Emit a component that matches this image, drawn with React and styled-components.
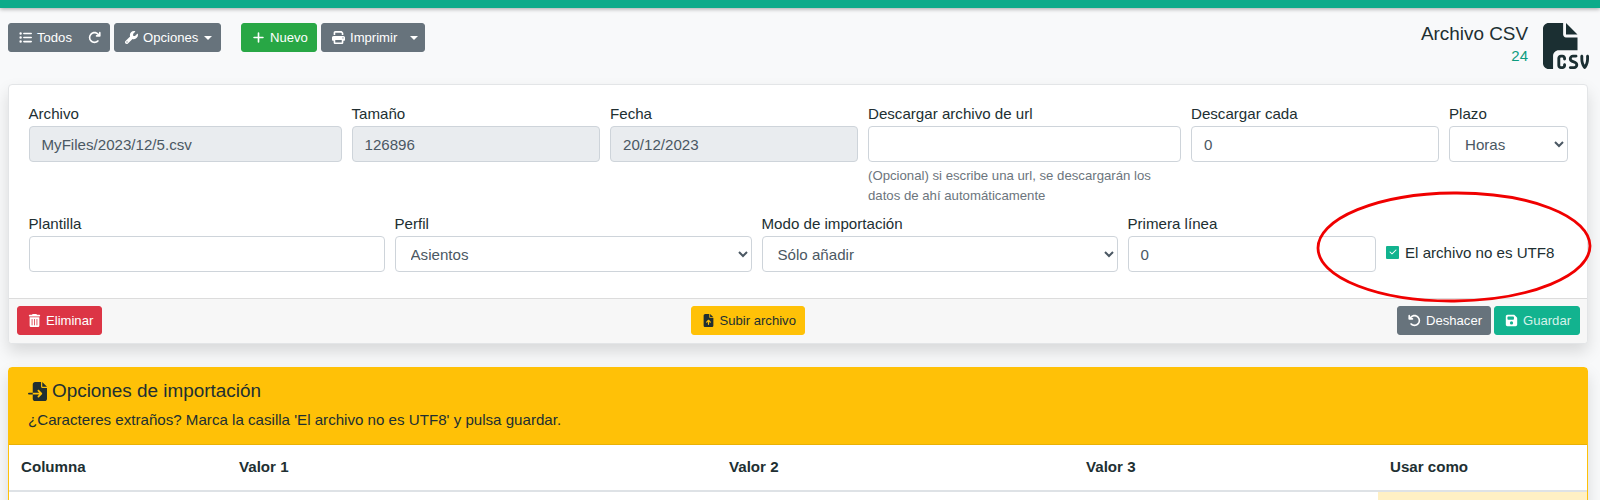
import React from "react";
import styled, { createGlobalStyle } from "styled-components";
import {
  FaListUl, FaArrowRotateRight, FaWrench, FaPlus, FaPrint, FaFileCsv, FaTrashCan,
  FaFileArrowUp, FaArrowRotateLeft, FaFloppyDisk, FaFileImport, FaCheck,
} from "react-icons/fa6";

const Global = createGlobalStyle`
  html, body { margin: 0; padding: 0; height: 500px; overflow: hidden; background: #f8f9fa; }
  body { font-family: "Liberation Sans", Arial, sans-serif; font-size: 15.12px; color: #212f32; }
  * { box-sizing: border-box; }
`;

const Page = styled.div`
  position: relative;
  width: 1600px;
  height: 500px;
  overflow: hidden;
`;
const TopBar = styled.div`
  height: 8px;
  background: #0dab8a;
  box-shadow: 0 1px 4px rgba(0, 0, 0, 0.35);
`;
const Main = styled.div`
  padding: 15px 12px 0 8px;
`;
const Header = styled.header`
  display: flex;
  justify-content: space-between;
  height: 61px;
`;
const Toolbar = styled.div`
  display: flex;
  align-items: flex-start;
  gap: 4px;
`;
const Spacer = styled.div`
  width: 12px;
`;
const Btn = styled.button`
  display: inline-flex;
  align-items: center;
  gap: 5px;
  height: 29px;
  width: ${(p) => p.$w}px;
  padding: 0 10px;
  border: 1px solid ${(p) => p.$bg};
  border-radius: 3px;
  background: ${(p) => p.$bg};
  color: ${(p) => p.$fg || "#fff"};
  font: 13.1px "Liberation Sans", Arial, sans-serif;
  white-space: nowrap;
  svg { flex: none; font-size: 13px; }
`;
const UploadBtn = styled(Btn)`
  margin-left: -4px;
`;
const Push = styled.span`
  margin-left: auto;
  margin-right: -2px;
  display: inline-flex;
`;
const Caret = styled.span`
  width: 0;
  height: 0;
  margin-left: auto;
  margin-right: ${(p) => p.$shift}px;
  border-left: 4px solid transparent;
  border-right: 4px solid transparent;
  border-top: 4px solid #fff;
`;
const Title = styled.div`
  display: flex;
  gap: 15px;
  margin-right: -1px;
`;
const TitleText = styled.div`
  text-align: right;
`;
const TitleName = styled.div`
  font-size: 18.9px;
  line-height: 22px;
`;
const TitleCount = styled.div`
  font-size: 15px;
  line-height: 18px;
  margin-top: 2px;
  color: #0d9c7e;
`;
const Card = styled.section`
  width: 1580px;
  background: #fff;
  border-radius: 4px;
  border: 1px solid #e3e5e7;
  box-shadow: 0 8px 16px rgba(0, 0, 0, 0.13);
`;
const Body = styled.div`
  padding: 20px 19px 26px 19.5px;
  display: flex;
  flex-direction: column;
  gap: 9px;
`;
const Row = styled.div`
  display: grid;
  grid-template-columns: ${(p) => p.$cols};
  column-gap: 10px;
  align-items: start;
`;
const Field = styled.div`
  display: flex;
  flex-direction: column;
`;
const Label = styled.label`
  font-size: 15.12px;
  line-height: 17px;
  margin-bottom: 4px;
`;
const Input = styled.div`
  height: 36px;
  padding: 0 12px;
  display: flex;
  align-items: center;
  font-size: 15.12px;
  color: #4b5863;
  border: 1px solid #ced4da;
  border-radius: 4px;
  background: ${(p) => (p.$readonly ? "#e9ecef" : "#fff")};
`;
const SelectBox = styled.select`
  height: 36px;
  width: 100%;
  padding: 0 8px 0 11px;
  font: 15.12px "Liberation Sans", Arial, sans-serif;
  color: #4b5863;
  border: 1px solid #ced4da;
  border-radius: 4px;
  background: #fff;
`;
const Help = styled.small`
  display: block;
  margin-top: 4px;
  font-size: 13.2px;
  line-height: 20px;
  color: #6c757d;
`;
const CheckWrap = styled.div`
  display: flex;
  align-items: center;
  gap: 6px;
  padding-top: 19px;
  height: 55px;
  font-size: 15.12px;
  white-space: nowrap;
`;
const Box = styled.span`
  display: inline-flex;
  align-items: center;
  justify-content: center;
  width: 13px;
  height: 13px;
  background: #12b38f;
  border-radius: 1px;
  color: #fff;
  svg { font-size: 8px; }
`;
const Footer = styled.div`
  display: flex;
  justify-content: space-between;
  align-items: center;
  height: 45px;
  padding: 0 7px 2px 8px;
  background: #f7f7f7;
  border-top: 1px solid #dcdcdc;
  border-radius: 0 0 4px 4px;
`;
const FooterGroup = styled.div`
  display: flex;
  gap: 3px;
`;
const WarnCard = styled.section`
  width: 1580px;
  margin-top: 23px;
  border: 1px solid #ffc107;
  border-radius: 4px;
  background: #fff;
  box-shadow: 0 8px 16px rgba(0, 0, 0, 0.13);
`;
const WarnHead = styled.div`
  height: 77px;
  background: #ffc107;
  padding: 11px 19px 0;
  border-bottom: 1px solid #e9b106;
`;
const WarnTitle = styled.div`
  display: flex;
  align-items: center;
  gap: 5px;
  font-size: 18.9px;
  line-height: 24px;
  svg { font-size: 19px; }
`;
const WarnText = styled.div`
  font-size: 15.12px;
  line-height: 20px;
  margin-top: 7px;
`;
const Table = styled.table`
  width: 100%;
  border-collapse: collapse;
  table-layout: fixed;
`;
const Th = styled.th`
  width: ${(p) => p.$w}px;
  height: 46px;
  padding: 0 12px 2px;
  text-align: left;
  font-size: 15.12px;
  font-weight: 700;
  border-bottom: 2px solid #dee2e6;
`;
const Td = styled.td`
  height: 46px;
  background: ${(p) => (p.$tint ? "#fff0c4" : "#fff")};
`;
const Ring = styled.svg`
  position: absolute;
  left: 1312px;
  top: 187px;
  width: 284px;
  height: 120px;
  pointer-events: none;
`;

function Select({ value }) {
  return (
    <SelectBox defaultValue={value}>
      <option>{value}</option>
    </SelectBox>
  );
}

export default function App() {
  return (
    <Page>
      <Global />
      <TopBar />
      <Main>
        <Header>
          <Toolbar>
            <Btn $bg="#67737c" $w={102}><FaListUl />Todos<Push><FaArrowRotateRight /></Push></Btn>
            <Btn $bg="#67737c" $w={107}><FaWrench />Opciones<Caret $shift={-2} /></Btn>
            <Spacer />
            <Btn $bg="#28a745" $w={76}><FaPlus />Nuevo</Btn>
            <Btn $bg="#67737c" $w={104}><FaPrint />Imprimir<Caret $shift={-4} /></Btn>
          </Toolbar>
          <Title>
            <TitleText>
              <TitleName>Archivo CSV</TitleName>
              <TitleCount>24</TitleCount>
            </TitleText>
            <FaFileCsv size={46} color="#1b2f32" />
          </Title>
        </Header>
        <Card>
          <Body>
            <Row $cols="313px 248.5px 248px 313px 248px 1fr">
              <Field><Label>Archivo</Label><Input $readonly>MyFiles/2023/12/5.csv</Input></Field>
              <Field><Label>Tamaño</Label><Input $readonly>126896</Input></Field>
              <Field><Label>Fecha</Label><Input $readonly>20/12/2023</Input></Field>
              <Field>
                <Label>Descargar archivo de url</Label>
                <Input />
                <Help>(Opcional) si escribe una url, se descargarán los datos de ahí automáticamente</Help>
              </Field>
              <Field><Label>Descargar cada</Label><Input>0</Input></Field>
              <Field><Label>Plazo</Label><Select value="Horas" /></Field>
            </Row>
            <Row $cols="356px 357px 356px 248.5px 1fr">
              <Field><Label>Plantilla</Label><Input /></Field>
              <Field><Label>Perfil</Label><Select value="Asientos" /></Field>
              <Field><Label>Modo de importación</Label><Select value="Sólo añadir" /></Field>
              <Field><Label>Primera línea</Label><Input>0</Input></Field>
              <CheckWrap><Box><FaCheck /></Box>El archivo no es UTF8</CheckWrap>
            </Row>
          </Body>
          <Footer>
            <FooterGroup><Btn $bg="#dc3545" $w={85}><FaTrashCan />Eliminar</Btn></FooterGroup>
            <UploadBtn $bg="#ffc107" $fg="#212f32" $w={114}><FaFileArrowUp />Subir archivo</UploadBtn>
            <FooterGroup>
              <Btn $bg="#67737c" $w={94}><FaArrowRotateLeft />Deshacer</Btn>
              <Btn $bg="#12b38f" $fg="#d5f2ea" $w={86}><FaFloppyDisk color="#fff" />Guardar</Btn>
            </FooterGroup>
          </Footer>
        </Card>
        <WarnCard>
          <WarnHead>
            <WarnTitle><FaFileImport />Opciones de importación</WarnTitle>
            <WarnText>¿Caracteres extraños? Marca la casilla 'El archivo no es UTF8' y pulsa guardar.</WarnText>
          </WarnHead>
          <Table>
            <thead>
              <tr>
                <Th $w={218}>Columna</Th>
                <Th $w={490}>Valor 1</Th>
                <Th $w={357}>Valor 2</Th>
                <Th $w={304}>Valor 3</Th>
                <Th>Usar como</Th>
              </tr>
            </thead>
            <tbody>
              <tr><Td /><Td /><Td /><Td /><Td $tint /></tr>
            </tbody>
          </Table>
        </WarnCard>
      </Main>
      <Ring viewBox="0 0 284 120">
        <ellipse cx="142" cy="60" rx="136" ry="54" fill="none" stroke="#f00000" strokeWidth="2.8" transform="rotate(-0.5 142 60)" />
      </Ring>
    </Page>
  );
}
